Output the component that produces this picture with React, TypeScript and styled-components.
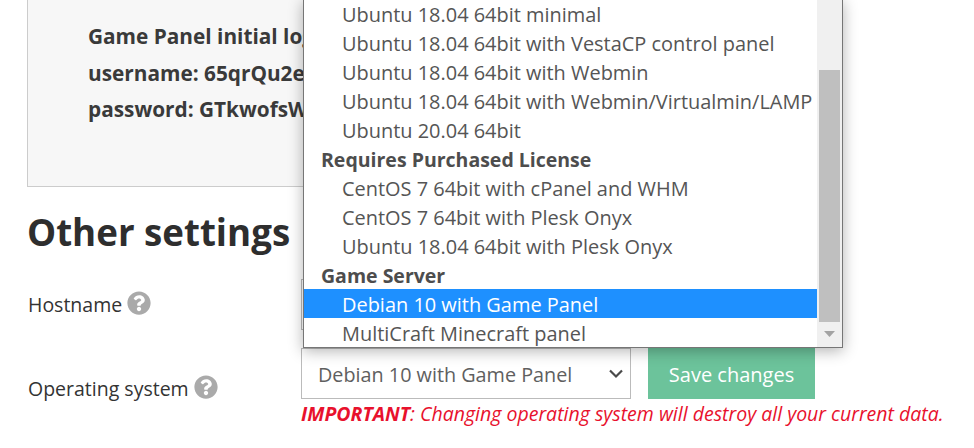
import React from "react";
import styled, { createGlobalStyle } from "styled-components";
import { FaQuestionCircle } from "react-icons/fa";

const GlobalStyle = createGlobalStyle`
  html, body {
    margin: 0;
    padding: 0;
    height: 448px;
    overflow: hidden;
    background: #fff;
    font-family: "Open Sans", "Liberation Sans", sans-serif;
  }
  * { box-sizing: border-box; }
`;

const Page = styled.div`
  position: relative;
  width: 974px;
  height: 448px;
  overflow: hidden;
  padding-left: 27px;
`;

const CredentialsBox = styled.div`
  width: 600px;
  height: 187px;
  padding: 18px 60px 0;
  background: #f7f7f7;
  border: 1px solid #ccc;
  border-top: none;
  color: #3a3a3a;
  font-size: 20.8px;
  font-weight: 700;
  line-height: 36.5px;
  white-space: nowrap;
`;

const Heading = styled.h2`
  margin: 19px 0 0;
  color: #2e2e2e;
  font-size: 36.7px;
  font-weight: 700;
  line-height: 52px;
`;

const Row = styled.div<{ $top: number }>`
  display: flex;
  align-items: flex-start;
  height: 51px;
  margin-top: ${(props) => props.$top}px;
`;

const Label = styled.label<{ $offset: number }>`
  display: flex;
  align-items: center;
  gap: 5px;
  width: 274px;
  padding-top: ${(props) => props.$offset}px;
  padding-left: 1px;
  color: #333;
  font-size: 19.5px;
  line-height: 30px;
`;

const HelpIcon = styled(FaQuestionCircle)`
  width: 24px;
  height: 24px;
  margin-top: -4px;
  color: #aaa;
`;

const TextInput = styled.div`
  width: 330px;
  height: 51px;
  border: 1px solid #bbb;
`;

const SelectBox = styled.div`
  display: flex;
  align-items: center;
  justify-content: space-between;
  width: 330px;
  height: 51px;
  padding: 1px 6px 0 16px;
  border: 1px solid #bbb;
  color: #5f5f5f;
  font-size: 19.8px;
`;

const SaveButton = styled.button`
  width: 167px;
  height: 51px;
  margin-left: 17px;
  padding: 2px 0 0;
  border: none;
  background: #6cc39b;
  color: #fff;
  font-family: inherit;
  font-size: 20px;
`;

const Warning = styled.p`
  margin: 0 0 0 274px;
  color: #e8112d;
  font-size: 19.5px;
  font-style: italic;
  line-height: 30px;
  white-space: nowrap;
`;

const Popup = styled.div`
  position: absolute;
  top: -1px;
  left: 303px;
  display: flex;
  width: 540px;
  height: 349px;
  background: #fff;
  border: 1px solid #767676;
  border-top: none;
  box-shadow: 0 3px 14px rgba(0, 0, 0, 0.3);
`;

const OptionList = styled.ul`
  flex: 1;
  margin: 0;
  padding: 0;
  list-style: none;
  font-size: 19.95px;
  line-height: 31px;
`;

const GroupName = styled.li`
  height: 29px;
  padding-left: 17px;
  color: #4d4d4d;
  font-size: 19.5px;
  font-weight: 700;
`;

const Option = styled.li<{ $selected?: boolean }>`
  height: 29px;
  padding-left: 38px;
  white-space: nowrap;
  color: ${(props) => (props.$selected ? "#fff" : "#555")};
  background: ${(props) => (props.$selected ? "#1e90ff" : "transparent")};
`;

const Scrollbar = styled.div`
  display: flex;
  flex-direction: column;
  width: 25px;
  padding: 0 2px;
  background: #f0f0f0;
`;

const ScrollThumb = styled.div`
  width: 21px;
  height: 252px;
  margin-top: 71px;
  background: #bfbfbf;
`;

const ScrollArrow = styled.svg`
  width: 11px;
  height: 6px;
  margin: 9px 0 0 5px;
  fill: #a3a3a3;
`;

const Chevron = () => (
  <svg width="16" height="10" viewBox="0 0 16 10" fill="none" stroke="#4a4a4a" strokeWidth="2.2">
    <path d="M2 1.5l6 6 6-6" />
  </svg>
);

const upper = [
  "Ubuntu 18.04 64bit minimal",
  "Ubuntu 18.04 64bit with VestaCP control panel",
  "Ubuntu 18.04 64bit with Webmin",
  "Ubuntu 18.04 64bit with Webmin/Virtualmin/LAMP",
  "Ubuntu 20.04 64bit",
];

const licensed = [
  "CentOS 7 64bit with cPanel and WHM",
  "CentOS 7 64bit with Plesk Onyx",
  "Ubuntu 18.04 64bit with Plesk Onyx",
];

export default function App() {
  return (
    <Page>
      <GlobalStyle />
      <CredentialsBox>
        <div>Game Panel initial login</div>
        <div>username: 65qrQu2e</div>
        <div>password: GTkwofsW</div>
      </CredentialsBox>
      <Heading>Other settings</Heading>
      <Row $top={21}>
        <Label $offset={11}>
          Hostname <HelpIcon />
        </Label>
        <TextInput />
      </Row>
      <Row $top={18}>
        <Label $offset={26}>
          Operating system <HelpIcon />
        </Label>
        <SelectBox>
          Debian 10 with Game Panel
          <Chevron />
        </SelectBox>
        <SaveButton>Save changes</SaveButton>
      </Row>
      <Warning>
        <strong>IMPORTANT</strong>: Changing operating system will destroy all your current data.
      </Warning>
      <Popup>
        <OptionList>
          {upper.map((name) => (
            <Option key={name}>{name}</Option>
          ))}
          <GroupName>Requires Purchased License</GroupName>
          {licensed.map((name) => (
            <Option key={name}>{name}</Option>
          ))}
          <GroupName>Game Server</GroupName>
          <Option $selected>Debian 10 with Game Panel</Option>
          <Option>MultiCraft Minecraft panel</Option>
        </OptionList>
        <Scrollbar>
          <ScrollThumb />
          <ScrollArrow viewBox="0 0 11 6">
            <path d="M0 0h11L5.5 6z" />
          </ScrollArrow>
        </Scrollbar>
      </Popup>
    </Page>
  );
}
